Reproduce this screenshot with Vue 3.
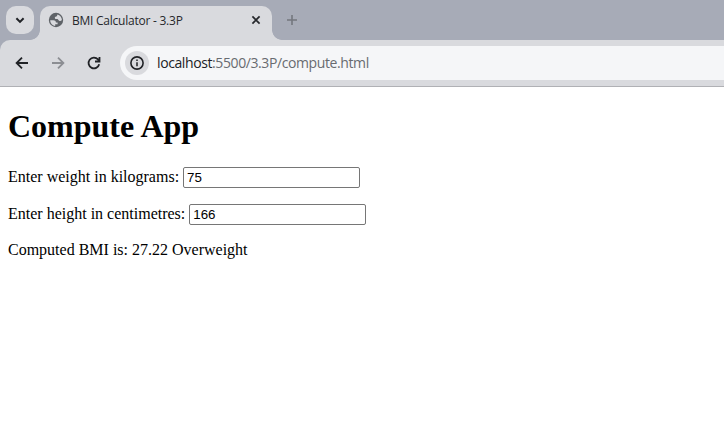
<script setup>
import { ref } from 'vue'

const weight = ref('75')
const height = ref('166')
</script>

<template>
  <div class="browser">
    <header class="tabstrip">
      <button class="tab-search" aria-label="Search tabs">
        <svg width="28" height="28" viewBox="0 0 28 28"><path d="M10.4 12.3 14 15.9l3.6-3.6" fill="none" stroke="#202226" stroke-width="2" /></svg>
      </button>
      <div class="tab">
        <svg class="globe" width="16" height="16" viewBox="0 0 16 16">
          <circle cx="8" cy="8" r="7.2" fill="#5f6368" />
          <path d="M2.2 8.2h3.2c1.6 0 2.5.8 2.5 2.4h1.7v1.6H7.2v1.7C4.3 13.5 2.2 11.2 2.2 8.2zM9.4 2.4c2.6.7 4.5 3 4.5 5.6-.7.9-1.7 1.1-2.8.7-.8-.3-.9-1.3-1.7-1.6-.8-.2-2 .1-2.4-.7-.5-1.1.2-1.8 1.3-1.9.8-.1.8-1.2 1.1-2.1z" fill="#d9dade" />
        </svg>
        <span class="title">BMI Calculator - 3.3P</span>
        <svg class="close" width="16" height="16" viewBox="0 0 16 16"><path d="m4.4 4.4 7.2 7.2m0-7.2-7.2 7.2" stroke="#26282c" stroke-width="1.7" /></svg>
      </div>
      <button class="new-tab" aria-label="New tab">
        <svg width="16" height="28" viewBox="0 0 16 28"><path d="M8 9v10M3 14h10" stroke="#74777e" stroke-width="1.6" /></svg>
      </button>
    </header>
    <nav class="toolbar">
      <svg class="nav" width="20" height="20" viewBox="0 0 20 20"><path d="M16 10H5M10 4.6 4.6 10l5.4 5.4" fill="none" stroke="#202226" stroke-width="1.8" /></svg>
      <svg class="nav" width="20" height="20" viewBox="0 0 20 20"><path d="M4 10h11M10 4.6l5.4 5.4-5.4 5.4" fill="none" stroke="#8c8e93" stroke-width="1.8" /></svg>
      <svg class="nav" width="20" height="20" viewBox="0 0 20 20"><path d="M15.2 11.3A5.4 5.4 0 1 1 14 6.4l1.3 1.5M15.5 4v4.5H11" fill="none" stroke="#202226" stroke-width="1.8" /></svg>
      <div class="address">
        <span class="info">
          <svg width="16" height="16" viewBox="0 0 16 16"><circle cx="8" cy="8" r="6.1" fill="none" stroke="#202226" stroke-width="1.6" /><path d="M8 7.2v4M8 4.5v1.6" stroke="#202226" stroke-width="1.5" /></svg>
        </span>
        <span class="url"><b>localhost</b>:5500/3.3P/compute.html</span>
      </div>
    </nav>
    <main>
      <h1>Compute App</h1>
      <p class="field"><label for="weight">Enter weight in kilograms:</label><input id="weight" v-model="weight" type="text" /></p>
      <p class="field"><label for="height">Enter height in centimetres:</label><input id="height" v-model="height" type="text" /></p>
      <p class="result">Computed BMI is: 27.22 Overweight</p>
    </main>
  </div>
</template>

<style>
body {
  background: #fff;
  overflow: hidden;
}
</style>

<style scoped>
.browser {
  height: 443px;
  overflow: hidden;
  background: #fff;
}
svg {
  display: block;
  flex: none;
}
button {
  border: 0;
  padding: 0;
  background: none;
}
.tabstrip {
  display: flex;
  height: 34px;
  padding: 6px 0 0 6px;
  background: #a7abb7;
}
.tab-search {
  width: 28px;
  height: 28px;
  margin-right: 6px;
  border-radius: 10px;
  background: #d9dade;
}
.tab {
  position: relative;
  display: flex;
  box-sizing: border-box;
  width: 232px;
  height: 34px;
  padding: 0 8px 6px;
  align-items: center;
  border-radius: 10px 10px 0 0;
  background: #d9dade;
}
.tab::before,
.tab::after {
  content: '';
  position: absolute;
  bottom: 0;
  width: 10px;
  height: 10px;
}
.tab::before {
  right: 100%;
  background: radial-gradient(circle at 0 0, transparent 9.5px, #d9dade 10.2px);
}
.tab::after {
  left: 100%;
  background: radial-gradient(circle at 100% 0, transparent 9.5px, #d9dade 10.2px);
}
.title {
  flex: 1;
  margin-left: 8px;
  padding-top: 1px;
  font: 12px/16px 'Open Sans', sans-serif;
  letter-spacing: -0.24px;
  white-space: nowrap;
  color: #26282c;
}
.new-tab {
  width: 16px;
  height: 28px;
  margin-left: 12px;
}
.toolbar {
  display: flex;
  box-sizing: border-box;
  height: 47px;
  padding: 6px 0 6px 12px;
  align-items: center;
  border-bottom: 1px solid #b0b1b5;
  border-top-left-radius: 10px;
  background: #d9dade;
  box-shadow: -10px -10px 0 #a7abb7;
}
.nav {
  margin-right: 16px;
}
.address {
  display: flex;
  flex: 1;
  height: 34px;
  align-items: center;
  padding-left: 5px;
  border-radius: 17px 0 0 17px;
  background: #f5f6f8;
}
.info {
  display: grid;
  place-items: center;
  width: 24px;
  height: 24px;
  border-radius: 50%;
  background: #d9dade;
}
.url {
  margin-left: 8px;
  font: 14px/20px 'Open Sans', sans-serif;
  letter-spacing: -0.4px;
  white-space: nowrap;
  color: #686b70;
}
.url b {
  font-weight: 400;
  color: #202226;
}
main {
  padding: 21px 8px;
  font: 16px 'Liberation Serif', serif;
  color: #000;
}
h1 {
  margin: 0 0 22px;
  font-size: 32px;
  line-height: 37px;
}
.field {
  display: flex;
  height: 21px;
  margin: 0 0 16px;
  gap: 4px;
  line-height: 20px;
}
input {
  box-sizing: border-box;
  width: 177px;
  height: 21px;
  padding: 2px 3px;
  border: 1px solid #767676;
  border-radius: 2px;
  font: 13.333px 'Liberation Sans', sans-serif;
}
.result {
  margin: 0;
  line-height: 18px;
}
</style>
